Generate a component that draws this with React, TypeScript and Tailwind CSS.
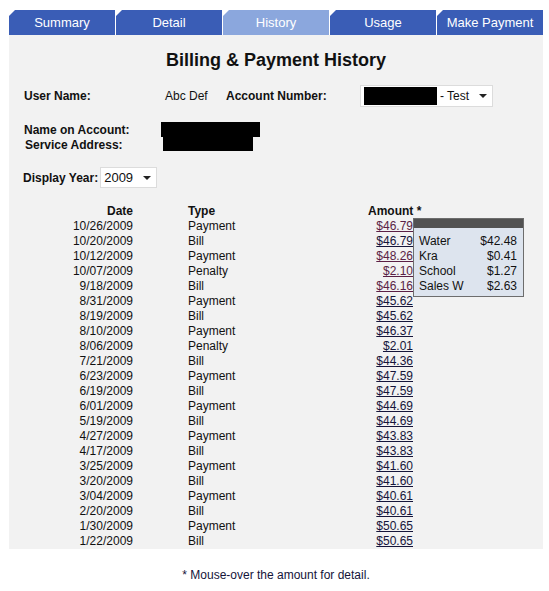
const tabs = ['Summary', 'Detail', 'History', 'Usage', 'Make Payment'];

const rows: [string, string, string, boolean][] = [
  ['10/26/2009', 'Payment', '$46.79', true],
  ['10/20/2009', 'Bill', '$46.79', false],
  ['10/12/2009', 'Payment', '$48.26', true],
  ['10/07/2009', 'Penalty', '$2.10', true],
  ['9/18/2009', 'Bill', '$46.16', true],
  ['8/31/2009', 'Payment', '$45.62', false],
  ['8/19/2009', 'Bill', '$45.62', false],
  ['8/10/2009', 'Payment', '$46.37', false],
  ['8/06/2009', 'Penalty', '$2.01', false],
  ['7/21/2009', 'Bill', '$44.36', false],
  ['6/23/2009', 'Payment', '$47.59', false],
  ['6/19/2009', 'Bill', '$47.59', false],
  ['6/01/2009', 'Payment', '$44.69', false],
  ['5/19/2009', 'Bill', '$44.69', false],
  ['4/27/2009', 'Payment', '$43.83', false],
  ['4/17/2009', 'Bill', '$43.83', false],
  ['3/25/2009', 'Payment', '$41.60', false],
  ['3/20/2009', 'Bill', '$41.60', false],
  ['3/04/2009', 'Payment', '$40.61', false],
  ['2/20/2009', 'Bill', '$40.61', false],
  ['1/30/2009', 'Payment', '$50.65', false],
  ['1/22/2009', 'Bill', '$50.65', false],
];

const detail: [string, string][] = [
  ['Water', '$42.48'],
  ['Kra', '$0.41'],
  ['School', '$1.27'],
  ['Sales W', '$2.63'],
];

function Arrow() {
  return <span className="h-0 w-0 border-x-[4px] border-t-[4px] border-x-transparent border-t-[#222]" />;
}

export default function App() {
  return (
    <div className="w-[549px] min-h-[591px] bg-white pt-[10px] pl-[9px] pr-[6px] font-['Liberation_Sans',Arial,sans-serif] text-[12px] text-[#111]">
      {/* tabs */}
      <div className="flex gap-px">
        {tabs.map((t) => (
          <div
            key={t}
            className={`flex h-[25px] w-[106px] items-center justify-center text-[13px] text-white [clip-path:polygon(6px_0,100%_0,100%_100%,0_100%,0_6px)] ${
              t === 'History' ? 'bg-[#8ba7dd]' : 'bg-[#3a5db6]'
            }`}
          >
            {t}
          </div>
        ))}
      </div>

      <div className="bg-[#f2f2f2] pt-[14px] pb-px">
        <h1 className="text-center text-[18px] font-bold leading-[22px]">Billing &amp; Payment History</h1>

        <div className="mt-[14px] flex h-[22px] items-center whitespace-nowrap pl-[15px]">
          <span className="w-[141px] shrink-0 font-bold">User Name:</span>
          <span className="w-[61px] shrink-0">Abc Def</span>
          <span className="w-[134px] shrink-0 font-bold">Account Number:</span>
          <div className="flex h-[22px] w-[133px] shrink-0 items-center border border-[#dcdcdc] bg-white pl-[3px]">
            <span className="h-[18px] w-[73px] bg-black" />
            <span className="ml-[3px]">- Test</span>
            <span className="ml-[10px] flex"><Arrow /></span>
          </div>
        </div>

        <div className="mt-[15px] flex h-[15px] items-center whitespace-nowrap pl-[15px]">
          <span className="w-[137px] shrink-0 font-bold">Name on Account:</span>
          <span className="h-[15px] w-[99px] bg-black" />
        </div>
        <div className="flex h-[15px] items-center whitespace-nowrap pl-[16px]">
          <span className="w-[138px] shrink-0 font-bold">Service Address:</span>
          <span className="h-[14px] w-[90px] self-start bg-black" />
        </div>

        <div className="mt-[15px] flex h-[21px] items-center whitespace-nowrap pl-[14px]">
          <span className="shrink-0 font-bold">Display Year:</span>
          <div className="ml-[2px] flex h-[21px] w-[57px] shrink-0 items-center justify-between border border-[#dcdcdc] bg-white pl-[3px] pr-[5px] text-[13px]">
            <span>2009</span>
            <Arrow />
          </div>
        </div>

        <div className="relative mt-[15px]">
          <div className="flex h-[15px] items-center font-bold">
            <span className="w-[124px] text-right">Date</span>
            <span className="ml-[55px] w-[180px]">Type</span>
            <span className="w-[45px] whitespace-nowrap text-right">
              Amount<span className="mr-[-8px]"> *</span>
            </span>
          </div>
          {rows.map(([d, t, a, v], i) => (
            <div key={i} className="flex h-[15px] items-center">
              <span className="w-[124px] text-right">{d}</span>
              <span className="ml-[55px] w-[180px]">{t}</span>
              <span className="w-[45px] text-right">
                <a className={`underline ${v ? 'text-[#5a1f45]' : 'text-[#15153a]'}`}>{a}</a>
              </span>
            </div>
          ))}

          <div className="absolute left-[404px] top-[15px] w-[111px] border border-[#6d6d6d] bg-[#dde4ee]">
            <div className="h-[9px] bg-[#525252]" />
            <div className="pb-[3px] pl-[5px] pr-[6px] pt-[5px]">
              {detail.map(([k, v]) => (
                <div key={k} className="flex h-[15px] items-center justify-between">
                  <span>{k}</span>
                  <span>{v}</span>
                </div>
              ))}
            </div>
          </div>
        </div>
      </div>

      <p className="mt-[19px] text-center leading-[14px] text-[#14143a]">* Mouse-over the amount for detail.</p>
    </div>
  );
}
